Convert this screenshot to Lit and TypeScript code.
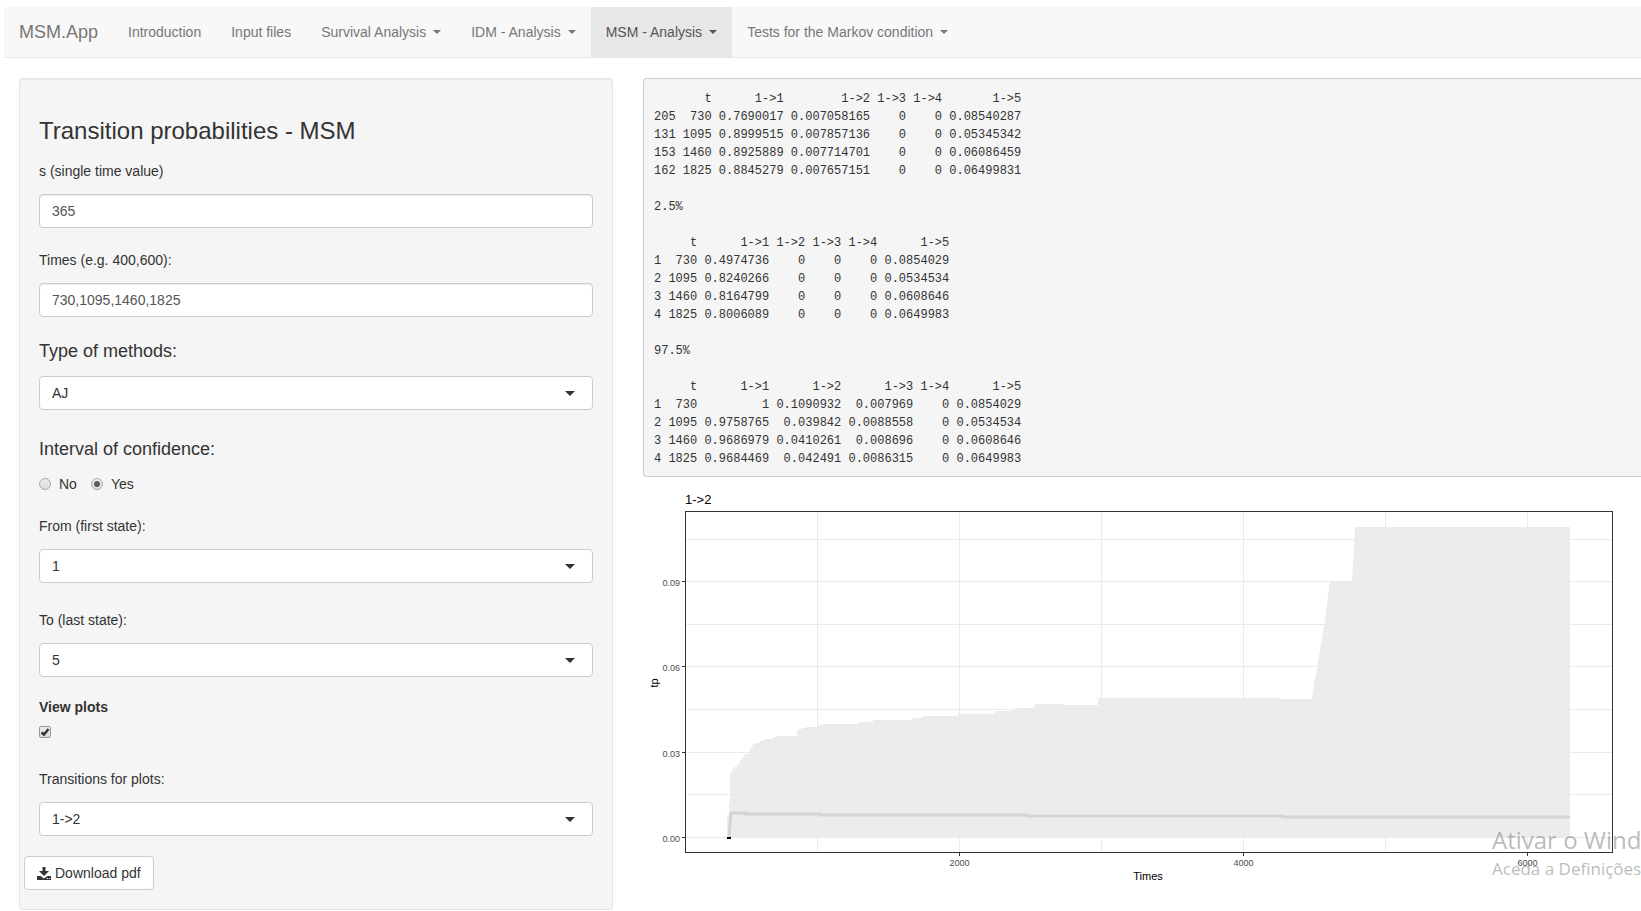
import { LitElement, html, svg, css } from "lit";
import { customElement, property, state } from "lit/decorators.js";
import { classMap } from "lit/directives/class-map.js";

const NAV = [
  { label: "Introduction", menu: false },
  { label: "Input files", menu: false },
  { label: "Survival Analysis", menu: true },
  { label: "IDM - Analysis", menu: true },
  { label: "MSM - Analysis", menu: true },
  { label: "Tests for the Markov condition", menu: true },
];

const OUTPUT = `       t      1->1        1->2 1->3 1->4       1->5
205  730 0.7690017 0.007058165    0    0 0.08540287
131 1095 0.8999515 0.007857136    0    0 0.05345342
153 1460 0.8925889 0.007714701    0    0 0.06086459
162 1825 0.8845279 0.007657151    0    0 0.06499831

2.5%

     t      1->1 1->2 1->3 1->4      1->5
1  730 0.4974736    0    0    0 0.0854029
2 1095 0.8240266    0    0    0 0.0534534
3 1460 0.8164799    0    0    0 0.0608646
4 1825 0.8006089    0    0    0 0.0649983

97.5%

     t      1->1      1->2      1->3 1->4      1->5
1  730         1 0.1090932  0.007969    0 0.0854029
2 1095 0.9758765  0.039842 0.0088558    0 0.0534534
3 1460 0.9686979 0.0410261  0.008696    0 0.0608646
4 1825 0.9684469  0.042491 0.0086315    0 0.0649983`;

/** Line plot of a transition probability with its confidence band. */
@customElement("probability-plot")
export class ProbabilityPlot extends LitElement {
  @property() heading = "";

  static styles = css`
    :host { display: block; }
    .plot { display: block; width: 100%; height: auto; font-family: "Liberation Sans", Arial, sans-serif; }
    .grid { stroke: #ebebeb; stroke-width: 1; }
    .frame { fill: none; stroke: #333; stroke-width: 1; }
    .tick { stroke: #333; stroke-width: 1; }
    .band { fill: #ebebeb; fill-opacity: 0.95; }
    .line { fill: none; stroke: #d3d3d3; stroke-width: 3; }
    .origin { stroke: #000; stroke-width: 2; }
    .title { font-size: 13px; fill: #000; }
    .axis { font-size: 11px; fill: #000; }
    .label { font-size: 9px; fill: #4d4d4d; }
    .end { text-anchor: end; }
    .middle { text-anchor: middle; }
  `;

  render() {
    const rows = [59.5, 101.5, 144.5, 186.5, 229.5, 272.5, 314.5, 357.5];
    const columns = [174.5, 316.5, 458.5, 600.5, 742.5, 884.5];
    const yTicks: [string, number][] = [["0.09", 101.5], ["0.06", 186.5], ["0.03", 272.5], ["0.00", 357.5]];
    const xTicks: [string, number][] = [["2000", 316.5], ["4000", 600.5], ["6000", 884.5]];
    return html`
      <svg class="plot" viewBox="0 0 998 412" role="img" aria-label="Transition probability over time">
        ${rows.map((y) => svg`<line class="grid" x1="43" x2="969" y1=${y} y2=${y}></line>`)}
        ${columns.map((x) => svg`<line class="grid" x1=${x} x2=${x} y1="32" y2="372"></line>`)}
        <path class="band" d="M84 358V335H86V322H87V292H89V289H91V287H94V284H97V280H99V277H101V274H105V272H107V268H109V266H110V264H112V263H117V261H121V259H130V257H133V256H154V251H156V249H159V248H163V247H174V245H180V244H215V242H230V240H269V238H279V236H315V234H352V231H370V229H374V228H391V225H392V224H420V225H455V218H637V219H669L672 199L677 170L682 140L687 101H709L712 47H927V358Z"></path>
        <path class="line" d="M86 357L88 333H103V334H177V335H384V336H640V337H927"></path>
        <line class="origin" x1="84" x2="88" y1="358" y2="358"></line>
        <rect class="frame" x="42.5" y="31.5" width="927" height="341"></rect>
        ${yTicks.map(([text, y]) => svg`
          <line class="tick" x1="39" x2="42" y1=${y} y2=${y}></line>
          <text class="label end" x="37" y=${y + 4}>${text}</text>`)}
        ${xTicks.map(([text, x]) => svg`
          <line class="tick" x1=${x} x2=${x} y1="373" y2="376"></line>
          <text class="label middle" x=${x} y="386">${text}</text>`)}
        <text class="title" x="42" y="24">${this.heading}</text>
        <text class="axis middle" x="505" y="400">Times</text>
        <text class="axis middle" x="15" y="203" transform="rotate(-90 15 203)">tp</text>
      </svg>
    `;
  }
}

@customElement("app-root")
export class AppRoot extends LitElement {
  @state() private active = "MSM - Analysis";
  @state() private transition = "1->2";

  static styles = css`
    :host {
      display: block;
      position: relative;
      overflow: hidden;
      font: 14px/20px "Liberation Sans", Arial, sans-serif;
      color: #333;
      background: #fff;
      padding: 7px 0 2px 4px;
    }
    * { box-sizing: border-box; }
    .navbar { display: flex; background: #f8f8f8; border-bottom: 1px solid #e7e7e7; }
    .brand { padding: 15px; font-size: 18px; color: #777; text-decoration: none; }
    .links { display: flex; margin: 0; padding: 0; list-style: none; }
    .link { display: flex; align-items: center; gap: 7px; padding: 15px; color: #777; text-decoration: none; }
    .link.active { background: #e7e7e7; color: #555; }
    .caret { border: 4px solid transparent; border-top-color: currentColor; border-bottom: 0; }
    .layout {
      display: grid;
      grid-template-columns: minmax(0, 594fr) minmax(0, 998fr);
      gap: 30px;
      align-items: start;
      padding: 20px 0 0 15px;
    }
    .well {
      display: flex;
      flex-direction: column;
      padding: 39px 19px 19px;
      border: 1px solid #e3e3e3;
      border-radius: 4px;
      background: #f5f5f5;
      box-shadow: inset 0 1px 1px rgba(0, 0, 0, 0.05);
    }
    .title { margin: 0 0 17px; font-size: 24px; line-height: 26px; font-weight: 400; }
    .field { display: flex; flex-direction: column; gap: 13px; margin-bottom: 22px; }
    .field.wide { margin-bottom: 27px; }
    .field.tight { margin-bottom: 20px; }
    .field.large { gap: 15px; margin: 2px 0 29px; font-size: 18px; }
    .group { margin: 0 0 22px; padding: 0; border: 0; }
    .legend { padding: 0; margin-bottom: 15px; font-size: 18px; }
    .choices { display: flex; gap: 14px; }
    .choice { display: flex; align-items: center; gap: 8px; }
    .control {
      width: 100%;
      height: 34px;
      margin: 0;
      padding: 6px 12px;
      border: 1px solid #ccc;
      border-radius: 4px;
      background: #fff;
      font: 14px/20px "Liberation Sans", Arial, sans-serif;
      color: #555;
      box-shadow: inset 0 1px 1px rgba(0, 0, 0, 0.075);
    }
    .picker { display: grid; align-items: center; }
    .picker > * { grid-area: 1 / 1; }
    .picker .control { appearance: none; color: #333; box-shadow: none; }
    .arrow {
      justify-self: end;
      margin-right: 18px;
      border: 5px solid transparent;
      border-top-color: #333;
      border-bottom: 0;
      pointer-events: none;
    }
    .mark {
      appearance: none;
      width: 12px;
      height: 12px;
      margin: 0;
      border: 1px solid #aaa;
      background: linear-gradient(#eee, #dcdcdc);
      display: grid;
      place-items: center;
    }
    .mark.radio { border-radius: 50%; }
    .mark.radio:checked::before { content: ""; width: 6px; height: 6px; border-radius: 50%; background: #5c5c5c; }
    .toggle { display: flex; flex-direction: column; gap: 9px; align-items: flex-start; margin-bottom: 31px; font-weight: 700; }
    .box { display: grid; }
    .box > * { grid-area: 1 / 1; }
    .mark.check { border-radius: 2px; border-color: #999; }
    .tick { width: 12px; height: 12px; pointer-events: none; visibility: hidden; }
    .mark.check:checked + .tick { visibility: visible; }
    .download {
      display: flex;
      align-items: center;
      align-self: flex-start;
      gap: 4px;
      height: 34px;
      margin-left: -15px;
      padding: 6px 12px;
      border: 1px solid #ccc;
      border-radius: 4px;
      background: #fff;
      font: inherit;
      color: #333;
    }
    .icon { width: 14px; height: 14px; fill: #333; }
    .results { min-width: 0; }
    .output {
      margin: 0 0 3px;
      padding: 11px 9px 8px 10px;
      border: 1px solid #ccc;
      border-right: 0;
      border-radius: 4px 0 0 4px;
      background: #f5f5f5;
      font: 12px/18px "Liberation Mono", monospace;
      overflow: hidden;
    }
    .watermark {
      position: absolute;
      right: 0;
      bottom: 30px;
      width: 149px;
      overflow: hidden;
      white-space: nowrap;
      font-family: "Open Sans", sans-serif;
      font-size: 17px;
      line-height: 26px;
      color: rgba(120, 120, 120, 0.5);
      pointer-events: none;
    }
    .notice { font-size: 24px; line-height: 32px; }
  `;

  private picker(id: string, label: string, value: string, options: string[], kind = "") {
    return html`
      <div class="field ${kind}">
        <label for=${id}>${label}</label>
        <div class="picker">
          <select class="control" id=${id} @change=${this.pick}>
            ${options.map((o) => html`<option ?selected=${o === value}>${o}</option>`)}
          </select>
          <span class="arrow"></span>
        </div>
      </div>
    `;
  }

  private pick(event: Event) {
    const select = event.target as HTMLSelectElement;
    if (select.id === "transition") this.transition = select.value;
  }

  render() {
    return html`
      <nav class="navbar">
        <a class="brand" href="#">MSM.App</a>
        <ul class="links">
          ${NAV.map((item) => html`
            <li>
              <a
                href="#"
                class=${classMap({ link: true, active: item.label === this.active })}
                @click=${() => (this.active = item.label)}
              >${item.label}${item.menu ? html`<span class="caret"></span>` : ""}</a>
            </li>
          `)}
        </ul>
      </nav>
      <main class="layout">
        <form class="well" @submit=${(e: Event) => e.preventDefault()}>
          <h3 class="title">Transition probabilities - MSM</h3>
          <div class="field">
            <label for="start">s (single time value)</label>
            <input class="control" id="start" type="text" value="365" />
          </div>
          <div class="field">
            <label for="times">Times (e.g. 400,600):</label>
            <input class="control" id="times" type="text" value="730,1095,1460,1825" />
          </div>
          ${this.picker("method", "Type of methods:", "AJ", ["AJ"], "large")}
          <fieldset class="group">
            <legend class="legend">Interval of confidence:</legend>
            <div class="choices">
              <label class="choice"><input class="mark radio" type="radio" name="interval" />No</label>
              <label class="choice"><input class="mark radio" type="radio" name="interval" checked />Yes</label>
            </div>
          </fieldset>
          ${this.picker("from", "From (first state):", "1", ["1", "2", "3", "4", "5"], "wide")}
          ${this.picker("to", "To (last state):", "5", ["1", "2", "3", "4", "5"], "tight")}
          <div class="toggle">
            <label for="plots">View plots</label>
            <span class="box">
              <input class="mark check" id="plots" type="checkbox" checked />
              <svg class="tick" viewBox="0 0 12 12" aria-hidden="true">
                <path d="M2.500 6.500l2.500 2L9.500 3" fill="none" stroke="#333" stroke-width="2.400"></path>
              </svg>
            </span>
          </div>
          ${this.picker("transition", "Transitions for plots:", this.transition, ["1->1", "1->2", "1->3", "1->4", "1->5"], "tight")}
          <button class="download" type="button">
            <svg class="icon" viewBox="0 0 14 14" aria-hidden="true">
              <path d="M5.500 1h3v4H12L7 10 2 5h3.500zM0 10h3.500L7 12.500 10.500 10H14v4H0zM10 12v1h1v-1zM12 12v1h1v-1z" fill-rule="evenodd"></path>
            </svg>
            Download pdf
          </button>
        </form>
        <section class="results">
          <pre class="output">${OUTPUT}</pre>
          <probability-plot .heading=${this.transition}></probability-plot>
        </section>
      </main>
      <aside class="watermark">
        <div class="notice">Ativar o Wind</div>
        <div>Aceda a Definições</div>
      </aside>
    `;
  }
}
